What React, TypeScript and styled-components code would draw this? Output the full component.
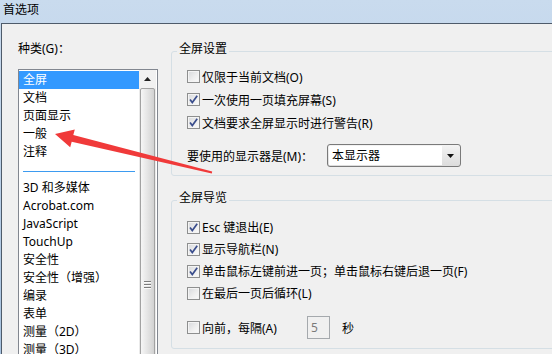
import React from "react";
import styled, { createGlobalStyle } from "styled-components";

const GlobalStyle = createGlobalStyle`
  html, body {
    margin: 0;
    padding: 0;
  }
  body {
    width: 552px;
    height: 354px;
    overflow: hidden;
    font-family: "Noto Sans", "Noto Sans CJK SC", sans-serif;
    font-size: 12px;
    color: #000;
  }
`;

const categories: (string | null)[] = [
    "全屏",
    "文档",
    "页面显示",
    "一般",
    "注释",
    null,
    "3D 和多媒体",
    "Acrobat.com",
    "JavaScript",
    "TouchUp",
    "安全性",
    "安全性（增强）",
    "编录",
    "表单",
    "测量（2D）",
    "测量（3D）",
];

const CheckBox: React.FC<{ checked?: boolean }> = ({ checked }) => (
    <Box>
        {checked ? (
            <svg width="11" height="11" viewBox="0 0 11 11">
                <path d="M2 5.5 L4.3 8.6 L9.2 1.8" fill="none" stroke="#3a4d8c" strokeWidth="1.7" />
            </svg>
        ) : null}
    </Box>
);

export default function App() {
    return (
        <Window>
            <GlobalStyle />
            <TitleBar>首选项</TitleBar>
            <Body>
                <LeftPane>
                    <PaneLabel>种类(G)：</PaneLabel>
                    <ListBox>
                        <Items>
                            {categories.map((c, i) =>
                                c === null ? (
                                    <Separator key={i} />
                                ) : (
                                    <Item key={i} $selected={i === 0}>{c}</Item>
                                )
                            )}
                        </Items>
                        <ScrollBar>
                            <ScrollUp>
                                <svg width="7" height="4" viewBox="0 0 7 4">
                                    <path d="M0 4 L3.5 0 L7 4 Z" fill="#222" />
                                </svg>
                            </ScrollUp>
                            <Thumb>
                                <Grip>
                                    <span />
                                    <span />
                                    <span />
                                </Grip>
                            </Thumb>
                        </ScrollBar>
                    </ListBox>
                </LeftPane>

                <RightPane>
                    <Group>
                        <Legend>全屏设置</Legend>
                        <GroupContent>
                            <Row $h={23}><CheckBox />仅限于当前文档(O)</Row>
                            <Row $h={23}><CheckBox checked />一次使用一页填充屏幕(S)</Row>
                            <Row $h={23}><CheckBox checked />文档要求全屏显示时进行警告(R)</Row>
                            <Row $h={23} $top={10}>
                                <FieldLabel $w={138}>要使用的显示器是(M)：</FieldLabel>
                                <Select>
                                    <SelectText>本显示器</SelectText>
                                    <SelectButton>
                                        <svg width="7" height="4" viewBox="0 0 7 4">
                                            <path d="M0 0 L7 0 L3.5 4 Z" fill="#111" />
                                        </svg>
                                    </SelectButton>
                                </Select>
                            </Row>
                        </GroupContent>
                    </Group>

                    <Group $top={14} $pt={6} $pb={9}>
                        <Legend>全屏导览</Legend>
                        <GroupContent>
                            <Row $h={22}><CheckBox checked />Esc 键退出(E)</Row>
                            <Row $h={22}><CheckBox checked />显示导航栏(N)</Row>
                            <Row $h={22}><CheckBox checked />单击鼠标左键前进一页；单击鼠标右键后退一页(F)</Row>
                            <Row $h={22}><CheckBox />在最后一页后循环(L)</Row>
                            <Row $h={23} $top={12}>
                                <CheckBox />
                                <FieldLabel $w={103}>向前，每隔(A)</FieldLabel>
                                <NumberBox>5</NumberBox>
                                <Unit>秒</Unit>
                            </Row>
                        </GroupContent>
                    </Group>
                </RightPane>
            </Body>

            <Overlay width="552" height="354" viewBox="0 0 552 354">
                <polygon
                    points="55,134 74.8,129.4 73.3,134.9 212.2,171.4 211.8,173.6 71.7,141.7 70.2,147.2"
                    fill="#f03a3a"
                />
            </Overlay>
        </Window>
    );
}

const Window = styled.div`
    position: relative;
    width: 552px;
    height: 354px;
    overflow: hidden;
    background: linear-gradient(to bottom, #c9dbee 0%, #bcd1e9 45%, #a7c2df 100%);
`;

const TitleBar = styled.div`
    height: 23px;
    box-sizing: border-box;
    padding: 2px 0 0 3px;
    line-height: 16px;
    color: #000;
`;

const Body = styled.div`
    display: flex;
    align-items: flex-start;
    margin-left: 1px;
    height: 331px;
    box-sizing: border-box;
    overflow: hidden;
    background: #f0f0f0;
    border-top: 1px solid #4e5b6a;
    border-left: 1px solid #4e5b6a;
`;

const LeftPane = styled.div`
    display: flex;
    flex-direction: column;
    padding: 17px 0 0 16px;
`;

const PaneLabel = styled.div`
    height: 16px;
    line-height: 16px;
    margin-bottom: 12px;
`;

const ListBox = styled.div`
    display: flex;
    width: 140px;
    box-sizing: border-box;
    border: 1px solid #828790;
    background: #fff;
`;

const Items = styled.div`
    width: 120px;
    padding-top: 1px;
`;

const Item = styled.div<{ $selected?: boolean }>`
    height: 18px;
    line-height: 18px;
    padding-left: 4px;
    white-space: nowrap;
    background: ${(p) => (p.$selected ? "#3399ff" : "transparent")};
    color: ${(p) => (p.$selected ? "#fff" : "#000")};
`;

const Separator = styled.div`
    height: 7px;
    margin: 10px 4px 0 4px;
    border-top: 1px solid #3d9bf0;
`;

const ScrollBar = styled.div`
    width: 17px;
    display: flex;
    flex-direction: column;
    background: #eaeaea;
`;

const ScrollUp = styled.div`
    height: 18px;
    display: flex;
    align-items: center;
    justify-content: center;
    background: #f1f1f1;
`;

const Thumb = styled.div`
    height: 392px;
    margin: 0 1px;
    box-sizing: border-box;
    border: 1px solid #a2a2a2;
    border-radius: 2px;
    background: linear-gradient(90deg, #f6f6f6 0%, #e6e6e6 45%, #d2d2d2 100%);
    display: flex;
    align-items: center;
    justify-content: center;
`;

const Grip = styled.div`
    display: flex;
    flex-direction: column;
    gap: 2px;
    span {
        display: block;
        width: 7px;
        height: 1px;
        background: #7c7c7c;
        box-shadow: 0 1px 0 #fafafa;
    }
`;

const RightPane = styled.div`
    margin-left: 13px;
    padding-top: 17px;
    display: flex;
    flex-direction: column;
`;

const Group = styled.fieldset<{ $top?: number; $pt?: number; $pb?: number }>`
    width: 420px;
    margin: ${(p) => p.$top ?? 0}px 0 0 0;
    padding: ${(p) => p.$pt ?? 4}px 0 ${(p) => p.$pb ?? 8}px 0;
    border: 1px solid #d5dfe5;
    border-radius: 3px;
    min-inline-size: 0;
`;

const Legend = styled.legend`
    margin-left: 5px;
    padding: 0 2px 4px 2px;
    line-height: 16px;
    height: 20px;
    box-sizing: border-box;
`;

const GroupContent = styled.div`
    display: flex;
    flex-direction: column;
    padding: 0 15px;
`;

const Row = styled.div<{ $h: number; $top?: number }>`
    display: flex;
    align-items: center;
    gap: 2px;
    height: ${(p) => p.$h}px;
    margin-top: ${(p) => p.$top ?? 0}px;
    white-space: nowrap;
`;

const Box = styled.span`
    flex: 0 0 auto;
    width: 13px;
    height: 13px;
    box-sizing: border-box;
    border: 1px solid #8e8f8f;
    background: linear-gradient(135deg, #d6d8db 0%, #eeeeee 55%, #fbfbfb 100%);
    box-shadow: inset 0 0 0 1px #f4f4f4;
    display: flex;
    align-items: center;
    justify-content: center;
    margin-right: 0;
`;

const FieldLabel = styled.span<{ $w: number }>`
    flex: 0 0 ${(p) => p.$w}px;
`;

const Select = styled.div`
    display: flex;
    width: 134px;
    height: 23px;
    box-sizing: border-box;
    padding: 1px;
    border: 1px solid #7a7a7a;
    border-radius: 3px;
    background: linear-gradient(to bottom, #f3f3f3, #dcdcdc);
`;

const SelectText = styled.div`
    flex: 1;
    background: #fff;
    padding-left: 3px;
    line-height: 19px;
`;

const SelectButton = styled.div`
    width: 17px;
    display: flex;
    align-items: center;
    justify-content: center;
`;

const NumberBox = styled.div`
    width: 23px;
    height: 23px;
    box-sizing: border-box;
    border: 1px solid #a5a9ad;
    background: #f0f0f0;
    color: #7a7a7a;
    padding-left: 3px;
    line-height: 21px;
`;

const Unit = styled.span`
    margin-left: 10px;
`;

const Overlay = styled.svg`
    position: absolute;
    left: 0;
    top: 0;
    pointer-events: none;
`;
